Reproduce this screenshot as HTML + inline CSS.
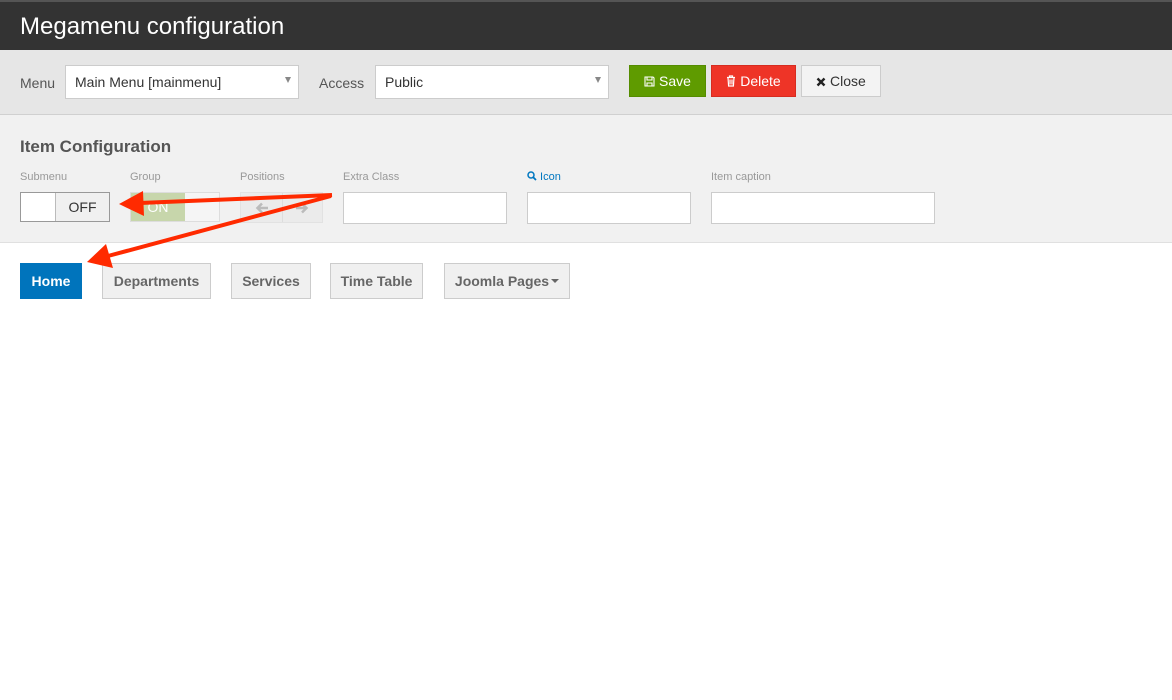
<!DOCTYPE html>
<html><head><meta charset="utf-8"><style>
*{box-sizing:border-box;margin:0;padding:0}
body{width:1172px;height:700px;background:#fff;font-family:"Liberation Sans",Arial,sans-serif;position:relative;overflow:hidden}
.a{position:absolute}
.hdr{left:0;top:0;width:1172px;height:50px;background:#333;border-top:2px solid #555}
.hdr h1{position:absolute;left:20px;top:11px;color:#fff;font-weight:normal;font-size:24px}
.tb{left:0;top:50px;width:1172px;height:65px;background:#e6e6e6;border-bottom:1px solid #d0d0d0}
.lbl{font-size:14px;color:#555}
.sel{background:#fff;border:1px solid #ccc;height:34px;font-size:14px;color:#333;padding:8px 9px}
.sel:after{content:"";position:absolute;right:7px;top:11px;border-left:3px solid transparent;border-right:3px solid transparent;border-top:6px solid #888}
.btn{height:32px;font-size:14px;text-align:center;line-height:30px}
.cfg{left:0;top:115px;width:1172px;height:128px;background:#f1f1f1;border-bottom:1px solid #e0e0e0}
.sm{font-size:11px;color:#999}
.inp{background:#fff;border:1px solid #ccc;height:32px}
.mi{top:263px;height:36px;border:1px solid #ccc;background:#f0f0f0;font-size:14px;font-weight:bold;color:#666;text-align:center;line-height:34px}
</style></head><body>
<div class="a hdr"><h1>Megamenu configuration</h1></div>
<div class="a tb"></div>
<div class="a lbl" style="left:20px;top:75px">Menu</div>
<div class="a sel" style="left:65px;top:65px;width:234px">Main Menu [mainmenu]</div>
<div class="a lbl" style="left:319px;top:75px">Access</div>
<div class="a sel" style="left:375px;top:65px;width:234px">Public</div>
<div class="a btn" style="left:629px;top:65px;width:77px;background:#5f9b00;border:1px solid #558c00;color:#fff"><svg width="11" height="11" viewBox="0 0 11 11" style="vertical-align:-1px"><path d="M1 1h8l1 1v8H1zM3 1v3h5V1M3 10V7h5v3" stroke="#fff" stroke-width="1.1" fill="none"/></svg> Save</div>
<div class="a btn" style="left:711px;top:65px;width:85px;background:#ee3427;border:1px solid #d62c20;color:#fff"><svg width="10" height="12" viewBox="0 0 10 12" style="vertical-align:-1px"><path d="M1 2.5h8M3.5 2.5V1h3v1.5M2 2.5l.6 8.5h4.8l.6-8.5M4 4.5v5M6 4.5v5" stroke="#fff" stroke-width="1.2" fill="none"/></svg> Delete</div>
<div class="a btn" style="left:801px;top:65px;width:80px;background:#f3f3f3;border:1px solid #ccc;color:#333"><svg width="10" height="10" viewBox="0 0 10 10" style="vertical-align:-1px"><path d="M1.5 1.5l7 7M8.5 1.5l-7 7" stroke="#222" stroke-width="2.4"/></svg> Close</div>
<div class="a cfg"></div>
<div class="a" style="left:20px;top:137px;font-size:17px;font-weight:bold;color:#555">Item Configuration</div>
<div class="a sm" style="left:20px;top:171px">Submenu</div>
<div class="a sm" style="left:130px;top:171px">Group</div>
<div class="a sm" style="left:240px;top:171px">Positions</div>
<div class="a sm" style="left:343px;top:171px">Extra Class</div>
<div class="a sm" style="left:527px;top:171px;color:#0077c0"><svg width="10" height="10" viewBox="0 0 10 10" style="vertical-align:-1px"><circle cx="4" cy="4" r="3" stroke="#0077c0" stroke-width="1.5" fill="none"/><path d="M6.2 6.2L9 9" stroke="#0077c0" stroke-width="1.8"/></svg> Icon</div>
<div class="a sm" style="left:711px;top:171px">Item caption</div>
<div class="a" style="left:20px;top:192px;width:90px;height:30px;border:1px solid #999;background:#fff"><div class="a" style="left:34px;top:0;width:54px;height:28px;background:#f0f0f0;border-left:1px solid #bbb;font-size:14px;color:#333;line-height:28px;text-align:center">OFF</div></div>
<div class="a" style="left:130px;top:192px;width:90px;height:30px;border:1px solid #ddd;background:#f5f5f5"><div class="a" style="left:0;top:0;width:54px;height:28px;background:#c7d6ab;color:#fff;font-size:14px;line-height:28px;text-align:center">ON</div></div>
<div class="a" style="left:240px;top:192px;width:83px;height:31px;border:1px solid #e2e2e2;background:#ebebeb">
<svg class="a" style="left:14px;top:9px" width="14" height="12" viewBox="0 0 14 12"><path d="M13 6H3M7 1.5L2.5 6 7 10.5" stroke="#bbb" stroke-width="2.5" fill="none"/></svg>
<div class="a" style="left:41px;top:0;width:1px;height:29px;background:#ddd"></div>
<svg class="a" style="left:54px;top:9px" width="14" height="12" viewBox="0 0 14 12"><path d="M1 6h10M7 1.5L11.5 6 7 10.5" stroke="#bbb" stroke-width="2.5" fill="none"/></svg></div>
<div class="a inp" style="left:343px;top:192px;width:164px"></div>
<div class="a inp" style="left:527px;top:192px;width:164px"></div>
<div class="a inp" style="left:711px;top:192px;width:224px"></div>
<div class="a mi" style="left:20px;width:62px;background:#0074bc;border-color:#0074bc;color:#fff">Home</div>
<div class="a mi" style="left:102px;width:109px">Departments</div>
<div class="a mi" style="left:231px;width:80px">Services</div>
<div class="a mi" style="left:330px;width:93px">Time Table</div>
<div class="a mi" style="left:444px;width:126px">Joomla Pages<span style="display:inline-block;border-left:4px solid transparent;border-right:4px solid transparent;border-top:4px solid #666;vertical-align:3px;margin-left:2px"></span></div>
<svg class="a" style="left:0;top:0" width="1172" height="700">
<path d="M332 195L140 203" stroke="#ff2a00" stroke-width="4" fill="none"/>
<polygon points="119,204 143,191 144,216" fill="#ff2a00"/>
<path d="M331 196L108 256" stroke="#ff2a00" stroke-width="4" fill="none"/>
<polygon points="87,262 106,244 113,268" fill="#ff2a00"/>
</svg>
</body></html>
